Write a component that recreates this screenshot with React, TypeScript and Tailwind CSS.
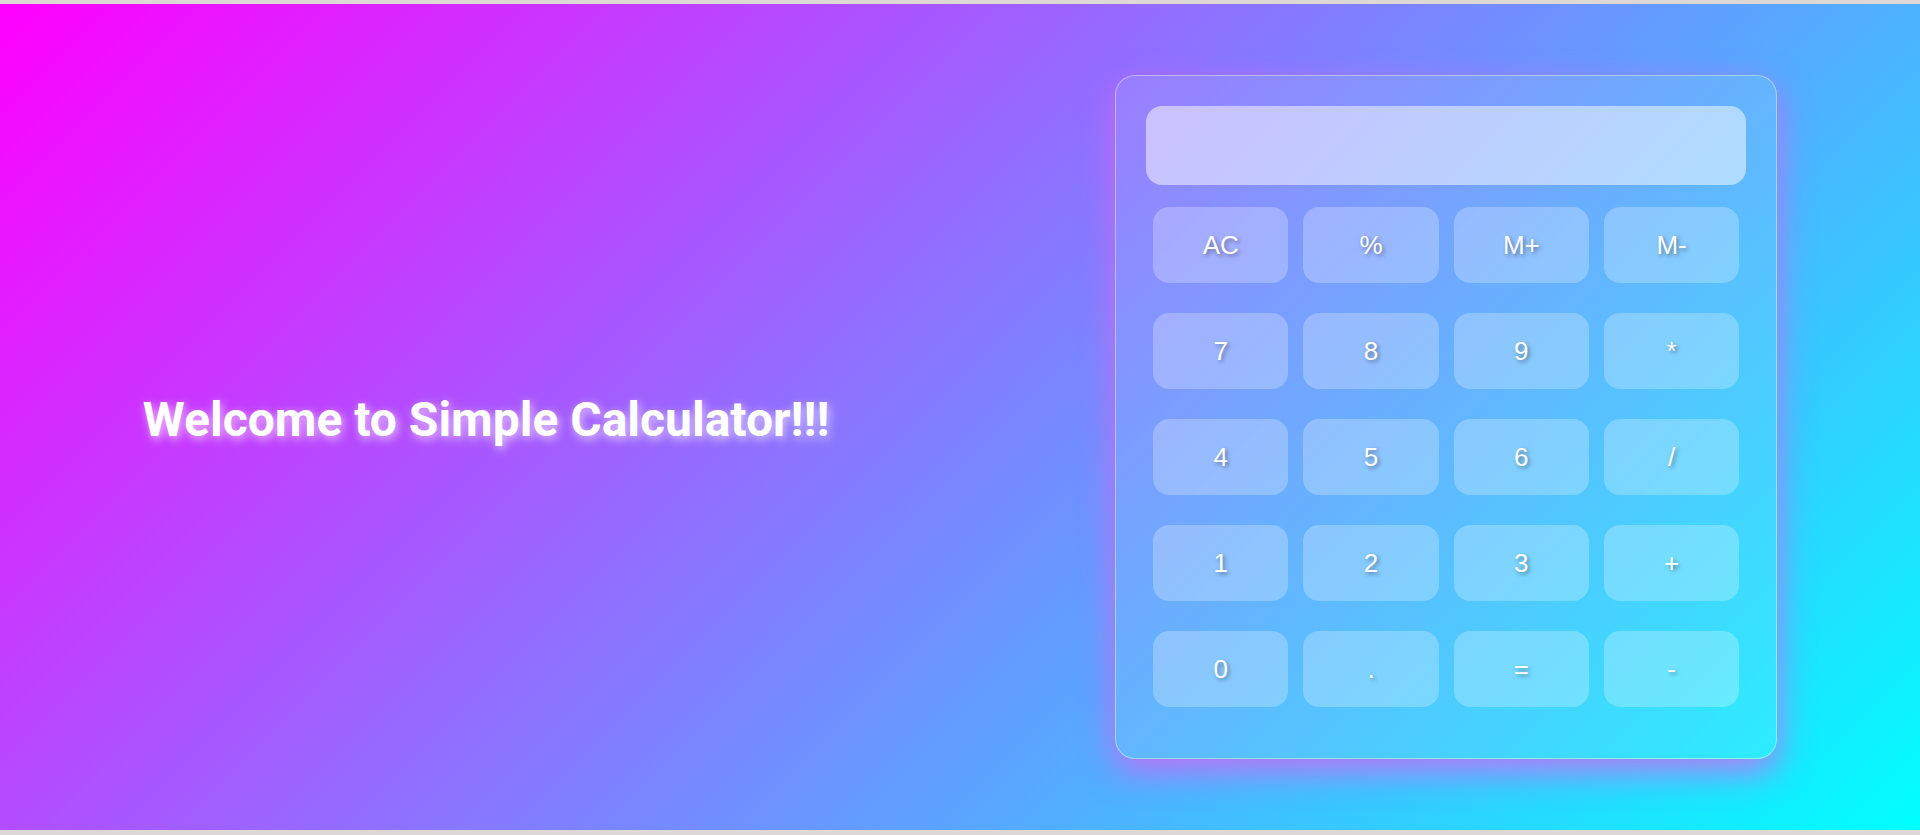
import { useState } from "react";

const keys = [
  "AC", "%", "M+", "M-",
  "7", "8", "9", "*",
  "4", "5", "6", "/",
  "1", "2", "3", "+",
  "0", ".", "=", "-",
];

const App = () => {
  const [display, setDisplay] = useState("");

  const press = (k: string) => {
    if (k === "AC") return setDisplay("");
    if (k === "=") {
      try {
        // eslint-disable-next-line no-new-func
        setDisplay(String(Function(`return (${display})`)()));
      } catch {
        setDisplay("Error");
      }
      return;
    }
    if (k === "M+" || k === "M-" || k === "%") return;
    setDisplay(display + k);
  };

  return (
    <div className="bg-[#ddd8d6] pt-[4px] pb-[5px]">
      <div className="h-[826px] flex items-center justify-around bg-[linear-gradient(135deg,#ff00ff,#00ffff)]">
        {/* Heading */}
        <h1
          className="mt-[5px] text-[48px] leading-[56px] font-bold text-white [text-shadow:2px_3px_10px_rgba(255,255,255,0.7)]"
          style={{ fontFamily: "Roboto, sans-serif" }}
        >
          Welcome to Simple Calculator!!!
        </h1>

        {/* Calculator */}
        <div className="w-[662px] rounded-[20px] border border-white/40 bg-white/10 pt-[30px] px-[30px] pb-[51px] shadow-[0_12px_34px_rgba(215,100,245,0.85)]">
          <div className="h-[79px] w-full rounded-[16px] bg-white/50 px-5 flex items-center justify-end text-[32px] text-white"
            style={{ fontFamily: "'Liberation Sans', Arial, sans-serif" }}
          >
            {display}
          </div>
          <div className="mt-[22px] px-[7px] grid grid-cols-4 gap-x-[15px] gap-y-[30px]">
            {keys.map((k) => (
              <button
                key={k}
                onClick={() => press(k)}
                className="h-[76px] rounded-[16px] bg-white/25 text-white text-[26px] flex items-center justify-center [text-shadow:2px_2px_4px_rgba(0,0,0,0.4)]"
                style={{ fontFamily: "'Liberation Sans', Arial, sans-serif" }}
              >
                {k}
              </button>
            ))}
          </div>
        </div>
      </div>
    </div>
  );
};

export default App;
